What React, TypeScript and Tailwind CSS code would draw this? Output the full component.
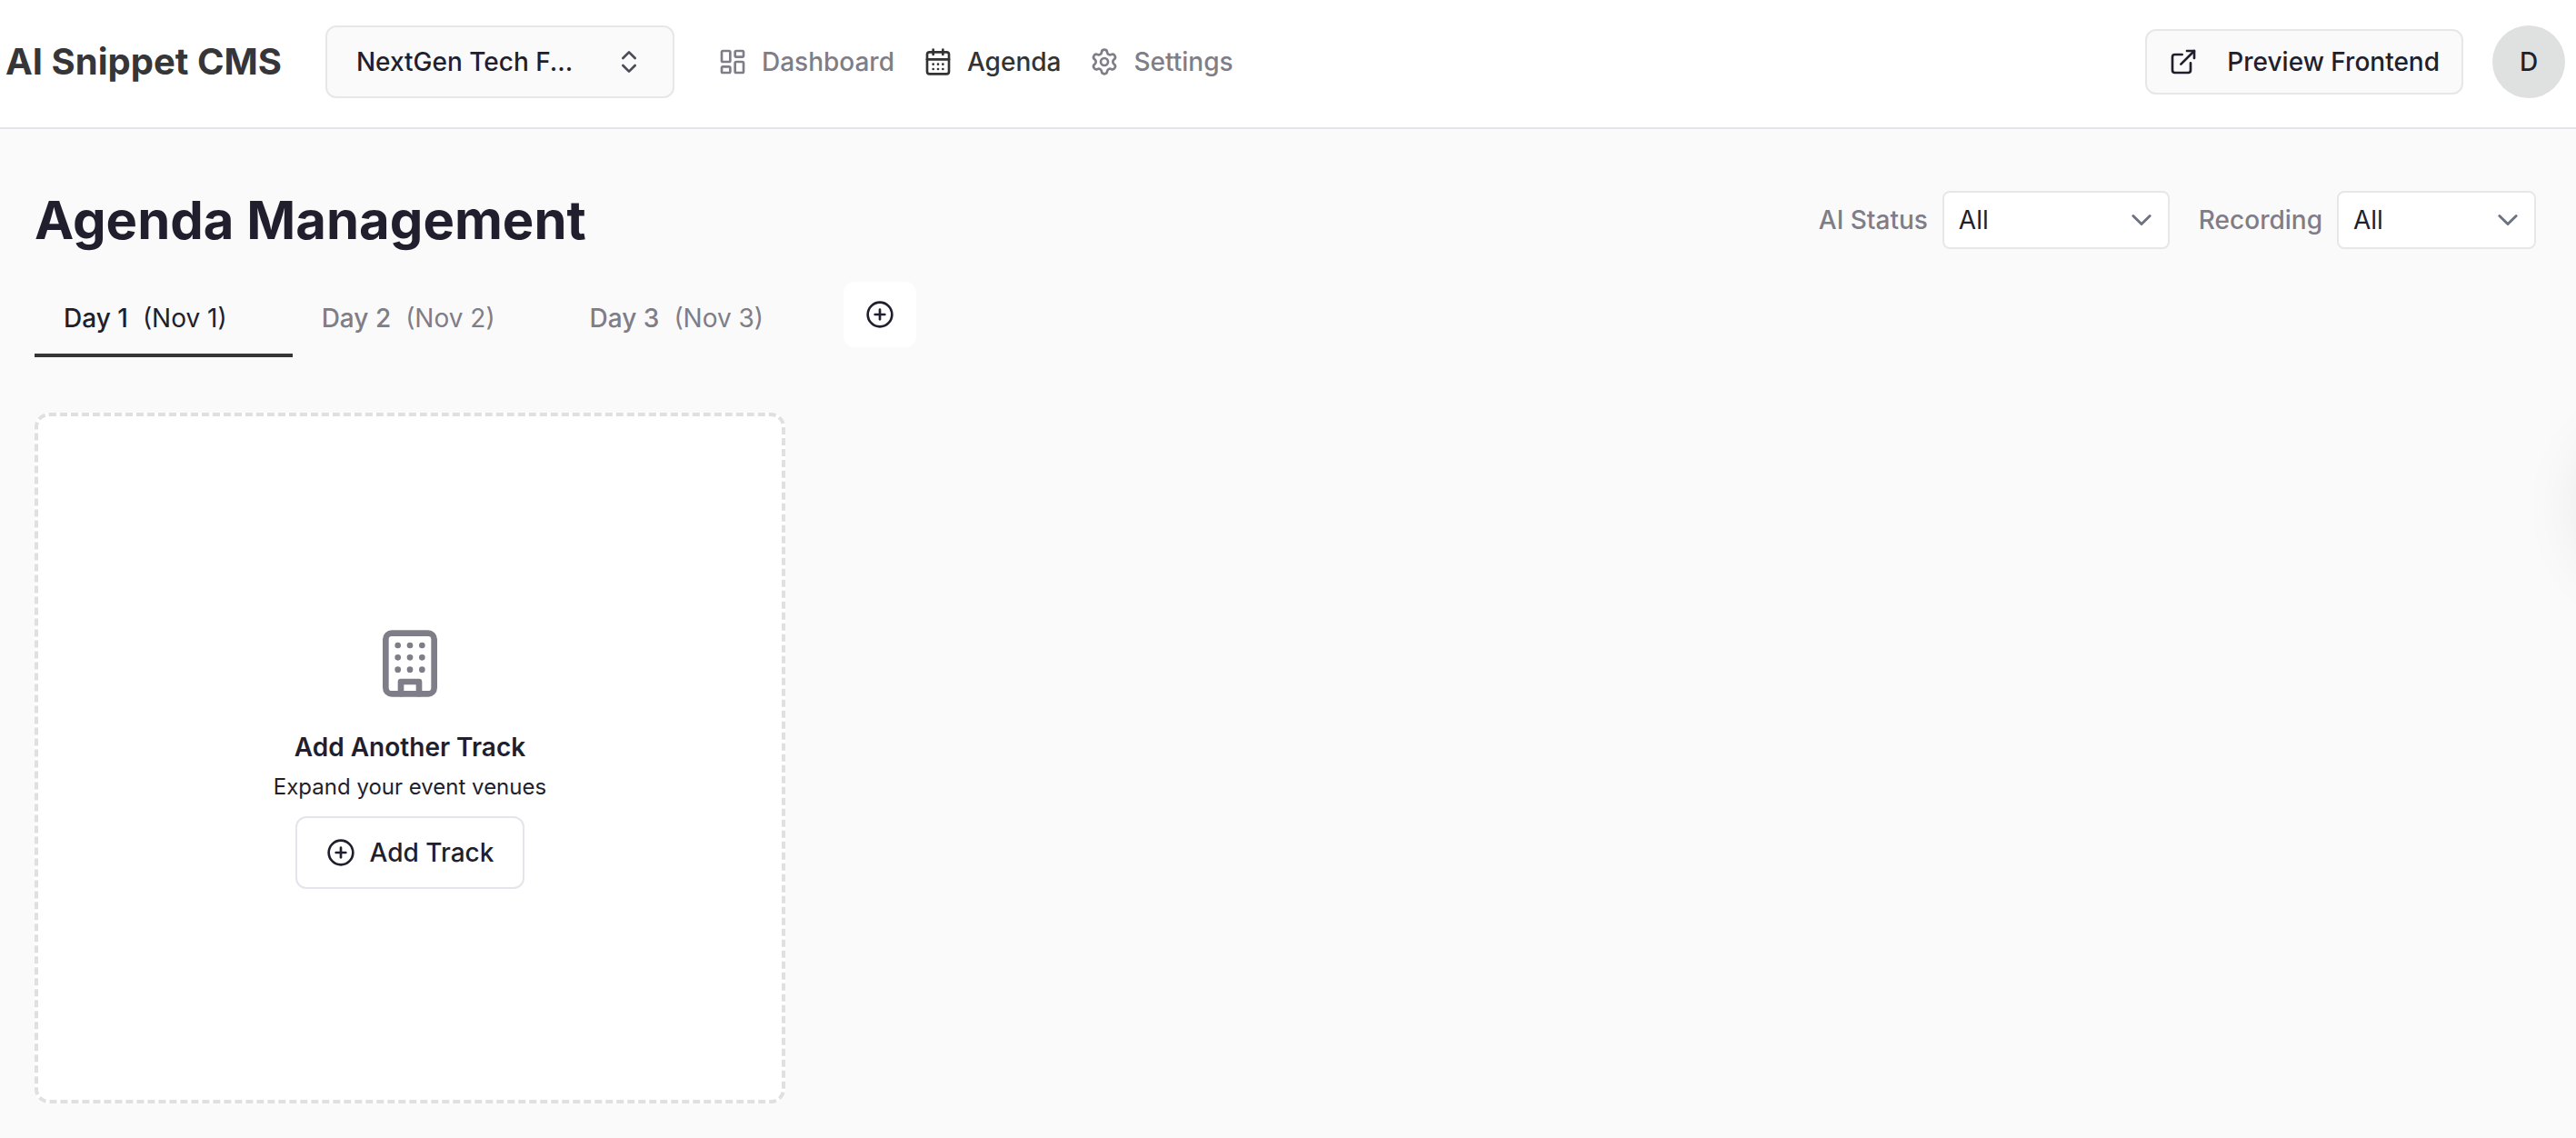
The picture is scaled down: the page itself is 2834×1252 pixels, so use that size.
import { useState } from "react";
import {
  CalendarDays,
  ChevronsUpDown,
  CirclePlus,
  ExternalLink,
  LayoutDashboard,
  Settings,
} from "lucide-react";

const navItems = [
  { label: "Dashboard", icon: LayoutDashboard },
  { label: "Agenda", icon: CalendarDays },
  { label: "Settings", icon: Settings },
];

const days = [
  { name: "Day 1", date: "(Nov 1)" },
  { name: "Day 2", date: "(Nov 2)" },
  { name: "Day 3", date: "(Nov 3)" },
];

function BuildingIcon() {
  return (
    <svg
      viewBox="0 0 24 24"
      fill="none"
      stroke="currentColor"
      strokeWidth="2"
      strokeLinecap="round"
      strokeLinejoin="round"
      className="size-20 text-[#7f7d87]"
    >
      <rect x="4" y="2" width="16" height="20" rx="2" ry="2" />
      <path d="M9 22v-4h6v4" />
      <path d="M8 6h.01M12 6h.01M16 6h.01" />
      <path d="M8 10h.01M12 10h.01M16 10h.01" />
      <path d="M8 14h.01M12 14h.01M16 14h.01" />
    </svg>
  );
}

function Filter({ id, label, width }: any) {
  return (
    <div className="flex items-center gap-4">
      <label htmlFor={id} className="font-medium text-[#7f7d87]">
        {label}
      </label>
      <div className="relative">
        <select
          id={id}
          className={`${width} h-16 appearance-none rounded-lg border-2 border-[#e7e7e7] bg-white pl-4 pr-16 text-[#211f2e] outline-none`}
        >
          <option>All</option>
        </select>
        <svg
          viewBox="0 0 20 20"
          fill="none"
          stroke="#6b7280"
          strokeWidth="1.25"
          strokeLinecap="round"
          strokeLinejoin="round"
          className="pointer-events-none absolute inset-y-0 right-2 my-auto size-[46px]"
        >
          <path d="M6 8l4 4 4-4" />
        </svg>
      </div>
    </div>
  );
}

export default function App() {
  const [activeNav, setActiveNav] = useState("Agenda");
  const [activeDay, setActiveDay] = useState("Day 1");

  return (
    <div className="relative min-h-screen overflow-hidden bg-[#fafafa] font-['Inter',sans-serif] text-[28px] leading-10 text-[#211f2e]">
      {/* Header */}
      <header className="flex items-center justify-between border-b-2 border-[#e5e4ea] bg-white pb-8 pl-1.5 pr-3 pt-7">
        <div className="flex items-center gap-12">
          <span className="text-[40px] font-bold text-[#363639]">
            AI Snippet CMS
          </span>
          <div className="relative">
            <select
              aria-label="Event"
              className="h-20 w-96 appearance-none rounded-xl border-2 border-[#e7e7e7] bg-[#fafafa] pl-8 pr-20 font-medium outline-none"
            >
              <option>NextGen Tech F...</option>
            </select>
            <ChevronsUpDown className="pointer-events-none absolute right-[34px] top-6 size-8 text-[#4d4b58]" />
          </div>
          <nav className="flex items-center gap-8">
            {navItems.map(({ label, icon: Icon }) => (
              <a
                key={label}
                href="#"
                onClick={() => setActiveNav(label)}
                className={`flex items-center gap-4 font-medium ${
                  activeNav === label ? "text-[#333335]" : "text-[#7f7d87]"
                }`}
              >
                <Icon className="size-8" />
                {label}
              </a>
            ))}
          </nav>
        </div>
        <div className="flex items-center gap-8">
          <button className="flex h-18 items-center gap-8 rounded-xl border-2 border-[#e7e7e7] bg-[#fafafa] px-6 font-medium">
            <ExternalLink className="size-8" />
            Preview Frontend
          </button>
          <button className="size-20 rounded-full bg-[#dfe0e0] font-medium">
            D
          </button>
        </div>
      </header>

      <main className="pl-[38px] pr-11 pt-16">
        {/* Title and filters */}
        <div className="flex items-center justify-between">
          <h1 className="text-[58px] font-bold leading-18">
            Agenda Management
          </h1>
          <div className="flex items-center gap-8">
            <Filter id="ai-status" label="AI Status" width="w-[250px]" />
            <Filter id="recording" label="Recording" width="w-[219px]" />
          </div>
        </div>

        {/* Days */}
        <div className="mt-6 flex items-start">
          {days.map((day) => (
            <button
              key={day.name}
              onClick={() => setActiveDay(day.name)}
              className={`flex h-[91px] items-center gap-4 border-b-4 pl-8 pr-18 pt-2 ${
                activeDay === day.name
                  ? "border-[#363639]"
                  : "border-transparent text-[#7f7d87]"
              }`}
            >
              <span className="font-medium">{day.name}</span>
              <span>{day.date}</span>
            </button>
          ))}
          <button
            aria-label="Add day"
            className="ml-4 mt-2 flex h-18 w-20 items-center justify-center rounded-xl bg-white"
          >
            <CirclePlus className="size-8" />
          </button>
        </div>

        {/* Tracks */}
        <section className="mb-9 mt-[61px] flex min-h-[760px] w-full max-w-[826px] flex-col items-center justify-center rounded-2xl border-4 border-dashed border-[#dfe0e0] bg-white">
          <BuildingIcon />
          <h2 className="mt-8 font-semibold">Add Another Track</h2>
          <p className="mt-2 text-2xl">Expand your event venues</p>
          <button className="mt-4 flex h-20 items-center gap-4 rounded-xl border-2 border-[#e5e4ea] bg-white px-8 font-medium">
            <CirclePlus className="size-8" />
            Add Track
          </button>
        </section>
      </main>

      <div className="absolute left-full top-[484px] ml-4 h-37 w-37 rounded-full shadow-[0_0_80px_rgba(0,0,0,0.12)]" />
    </div>
  );
}
